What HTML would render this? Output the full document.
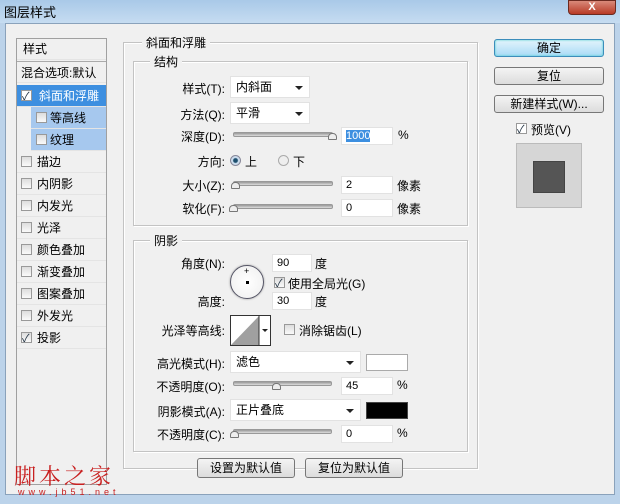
<!DOCTYPE html>
<html><head><meta charset="utf-8"><style>
*{margin:0;padding:0;box-sizing:border-box}
body{width:620px;height:504px;overflow:hidden;background:#f0f0f0;font-family:"Liberation Sans","Noto Sans CJK SC",sans-serif;font-size:12px;color:#000;position:relative}
.a{position:absolute;white-space:nowrap}
.title{left:0;top:0;width:620px;height:23px;background:linear-gradient(#a9c9e8,#c6dcf1);}
.frame{left:0;top:23px;width:620px;height:481px;background:#bcd3ea}
.body{left:5px;top:23px;width:610px;height:472px;background:#f0f0f0;border:1px solid #8aa2bb}
.fs{position:absolute;border:1px solid #c3c3c3;box-shadow:1px 1px 0 #fff inset,1px 1px 0 #fff}
.lg{position:absolute;background:#f0f0f0;padding:0 4px;top:-9px;font-size:12px}
.lbl{position:absolute;text-align:right;width:100px;font-size:12px}
.inp{position:absolute;background:#fff;border:1px solid #e2e2e2;height:18px;font-size:11px;padding-left:4px;line-height:16px}
.dd{position:absolute;background:#fff;border:1px solid #e2e2e2;height:22px;padding-left:5px;line-height:20px}
.dd:after{content:"";position:absolute;right:6px;top:9px;border:4px solid transparent;border-top:4px solid #222}
.sl{position:absolute;height:5px;background:linear-gradient(#999,#ddd);border:1px solid #999;border-radius:2px}
.th{position:absolute;width:9px;height:7px;border:1px solid #777;border-radius:4px 4px 1px 1px;background:#eee}
.cb{position:absolute;width:11px;height:11px;border:1px solid #999;background:linear-gradient(#ddd,#fafafa)}
.ck:after{content:"✓";position:absolute;left:0;top:-3px;font-size:11px;color:#234}
.btn{position:absolute;border:1px solid #777;border-radius:3px;background:linear-gradient(#f4f4f4,#dcdcdc);text-align:center;line-height:16px}
.row{position:absolute;left:17px;width:89px;height:22px;line-height:22px;border-bottom:1px solid #e4e4e4}
</style></head><body>
<div class="a title"></div>
<div class="a" style="left:4px;top:2px;font-size:13px">图层样式</div>
<div class="a" style="left:568px;top:0;width:48px;height:15px;background:linear-gradient(#d98a7a,#b83a26);border:1px solid #6b2a20;border-radius:0 0 4px 4px;color:#fff;text-align:center;font-size:11px;line-height:13px;font-weight:bold">X</div>
<div class="a frame"></div>
<div class="a body"></div>

<!-- left list -->
<div class="a" style="left:16px;top:38px;width:91px;height:447px;border:1px solid #a0a0a0;background:#f0f0f0"></div>
<div class="row" style="top:38px;padding-left:6px">样式</div>
<div class="row" style="top:61px;padding-left:4px;border-top:1px solid #aaa">混合选项:默认</div>
<div class="row" style="top:85px;background:#3d8fe0;color:#fff;padding-left:22px">斜面和浮雕</div>
<div class="cb ck" style="left:21px;top:90px;background:#fff"></div>
<div class="row" style="top:107px;left:31px;width:75px;background:#a6c8ee;padding-left:19px">等高线</div>
<div class="cb" style="left:36px;top:112px"></div>
<div class="row" style="top:129px;left:31px;width:75px;background:#a6c8ee;padding-left:19px">纹理</div>
<div class="cb" style="left:36px;top:134px"></div>
<div class="row" style="top:151px;padding-left:20px">描边</div><div class="cb" style="left:21px;top:156px"></div>
<div class="row" style="top:173px;padding-left:20px">内阴影</div><div class="cb" style="left:21px;top:178px"></div>
<div class="row" style="top:195px;padding-left:20px">内发光</div><div class="cb" style="left:21px;top:200px"></div>
<div class="row" style="top:217px;padding-left:20px">光泽</div><div class="cb" style="left:21px;top:222px"></div>
<div class="row" style="top:239px;padding-left:20px">颜色叠加</div><div class="cb" style="left:21px;top:244px"></div>
<div class="row" style="top:261px;padding-left:20px">渐变叠加</div><div class="cb" style="left:21px;top:266px"></div>
<div class="row" style="top:283px;padding-left:20px">图案叠加</div><div class="cb" style="left:21px;top:288px"></div>
<div class="row" style="top:305px;padding-left:20px">外发光</div><div class="cb" style="left:21px;top:310px"></div>
<div class="row" style="top:327px;padding-left:20px">投影</div><div class="cb ck" style="left:21px;top:332px"></div>

<!-- main fieldsets -->
<div class="fs" style="left:123px;top:42px;width:355px;height:427px"><div class="lg" style="left:18px;top:-9px">斜面和浮雕</div></div>
<div class="fs" style="left:133px;top:61px;width:335px;height:165px"><div class="lg" style="left:16px">结构</div></div>
<div class="fs" style="left:133px;top:240px;width:335px;height:212px"><div class="lg" style="left:16px">阴影</div></div>

<div class="lbl" style="left:125px;top:80px">样式(T):</div>
<div class="dd" style="left:230px;top:76px;width:80px">内斜面</div>
<div class="lbl" style="left:125px;top:106px">方法(Q):</div>
<div class="dd" style="left:230px;top:102px;width:80px">平滑</div>
<div class="lbl" style="left:125px;top:128px">深度(D):</div>
<div class="sl" style="left:233px;top:132px;width:100px"></div><div class="th" style="left:328px;top:133px"></div>
<div class="inp" style="left:341px;top:127px;width:52px"><span style="background:#3d8fe0;color:#fff">1000</span></div>
<div class="a" style="left:398px;top:128px">%</div>
<div class="lbl" style="left:125px;top:153px">方向:</div>
<div class="a" style="left:230px;top:155px;width:11px;height:11px;border-radius:50%;border:1px solid #889;background:radial-gradient(#1d4f6e 30%,#cde 45%)"></div>
<div class="a" style="left:245px;top:153px">上</div>
<div class="a" style="left:278px;top:155px;width:11px;height:11px;border-radius:50%;border:1px solid #aaa;background:#eee"></div>
<div class="a" style="left:293px;top:153px">下</div>
<div class="lbl" style="left:125px;top:177px">大小(Z):</div>
<div class="sl" style="left:233px;top:181px;width:100px"></div><div class="th" style="left:231px;top:182px"></div>
<div class="inp" style="left:341px;top:176px;width:52px">2</div><div class="a" style="left:397px;top:177px">像素</div>
<div class="lbl" style="left:125px;top:200px">软化(F):</div>
<div class="sl" style="left:233px;top:204px;width:100px"></div><div class="th" style="left:229px;top:205px"></div>
<div class="inp" style="left:341px;top:199px;width:52px">0</div><div class="a" style="left:397px;top:200px">像素</div>

<div class="lbl" style="left:125px;top:255px">角度(N):</div>
<div class="a" style="left:230px;top:265px;width:34px;height:34px;border-radius:50%;border:1px solid #556;background:radial-gradient(#fff,#eee);box-shadow:0 0 2px #999"></div>
<div class="a" style="left:246px;top:281px;width:3px;height:3px;background:#000"></div>
<div class="a" style="left:244px;top:266px;font-size:9px">+</div>
<div class="inp" style="left:272px;top:254px;width:40px">90</div><div class="a" style="left:315px;top:255px">度</div>
<div class="cb ck" style="left:274px;top:277px"></div><div class="a" style="left:288px;top:275px">使用全局光(G)</div>
<div class="lbl" style="left:125px;top:293px">高度:</div>
<div class="inp" style="left:272px;top:292px;width:40px">30</div><div class="a" style="left:315px;top:293px">度</div>
<div class="lbl" style="left:125px;top:322px">光泽等高线:</div>
<div class="a" style="left:230px;top:315px;width:41px;height:31px;border:1px solid #333;background:#fff"><svg width="39" height="29" style="position:absolute;left:0;top:0"><polygon points="0,29 28,0 28,29" fill="#a0a0a0"/><line x1="28" y1="0" x2="28" y2="29" stroke="#333"/><polygon points="31,13 37,13 34,16" fill="#222"/></svg></div>
<div class="cb" style="left:284px;top:324px"></div><div class="a" style="left:299px;top:322px">消除锯齿(L)</div>
<div class="lbl" style="left:125px;top:355px">高光模式(H):</div>
<div class="dd" style="left:230px;top:351px;width:131px">滤色</div>
<div class="a" style="left:366px;top:354px;width:42px;height:17px;background:#fff;border:1px solid #aaa"></div>
<div class="lbl" style="left:125px;top:378px">不透明度(O):</div>
<div class="sl" style="left:233px;top:381px;width:99px"></div><div class="th" style="left:272px;top:383px"></div>
<div class="inp" style="left:341px;top:377px;width:52px">45</div><div class="a" style="left:397px;top:378px">%</div>
<div class="lbl" style="left:125px;top:403px">阴影模式(A):</div>
<div class="dd" style="left:230px;top:399px;width:131px">正片叠底</div>
<div class="a" style="left:366px;top:402px;width:42px;height:17px;background:#000;border:1px solid #444"></div>
<div class="lbl" style="left:125px;top:426px">不透明度(C):</div>
<div class="sl" style="left:233px;top:429px;width:99px"></div><div class="th" style="left:230px;top:431px"></div>
<div class="inp" style="left:341px;top:425px;width:52px">0</div><div class="a" style="left:397px;top:426px">%</div>

<div class="btn" style="left:197px;top:458px;width:98px;height:20px;line-height:18px">设置为默认值</div>
<div class="btn" style="left:305px;top:458px;width:98px;height:20px;line-height:18px">复位为默认值</div>

<div class="btn" style="left:494px;top:39px;width:110px;height:18px;border-color:#3c8dbb;background:linear-gradient(#e3f4fc,#a9dbf6);box-shadow:0 0 2px #4cc inset">确定</div>
<div class="btn" style="left:494px;top:67px;width:110px;height:18px">复位</div>
<div class="btn" style="left:494px;top:95px;width:110px;height:18px">新建样式(W)...</div>
<div class="cb ck" style="left:516px;top:123px;background:#fff"></div><div class="a" style="left:531px;top:121px">预览(V)</div>
<div class="a" style="left:516px;top:143px;width:66px;height:65px;background:#d6d6d6;border:1px solid #bbb"></div>
<div class="a" style="left:533px;top:161px;width:32px;height:32px;background:#555;border:1px solid #444"></div>

<div class="a" style="left:14px;top:460px;font-size:22px;color:#c82020;font-family:'Noto Serif CJK SC',serif;letter-spacing:3px">脚本之家</div>
<div class="a" style="left:18px;top:487px;font-size:9px;color:#c82020;letter-spacing:4px">www.jb51.net</div>
</body></html>
